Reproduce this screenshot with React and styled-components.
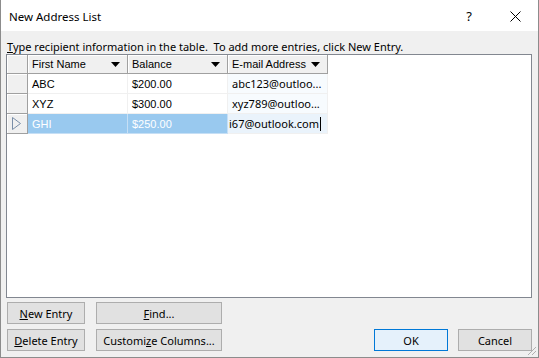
import React from "react";
import styled, { createGlobalStyle } from "styled-components";

const Global = createGlobalStyle`
  html, body { margin: 0; padding: 0; background: #f0f0f0; }
  body { font-family: "Segoe UI", "Noto Sans", "Liberation Sans", sans-serif; }
`;

const Window = styled.div`
  width: 539px;
  height: 358px;
  box-sizing: border-box;
  border: 1px solid #8c8c8c;
  border-top: none;
  display: flex;
  flex-direction: column;
  background: #f0f0f0;
  position: relative;
`;

const TitleBar = styled.div`
  height: 31px;
  background: #fff;
  display: flex;
  align-items: center;
  padding-left: 8px;
  padding-top: 1px;
  box-sizing: border-box;
  font-size: 11.5px;
  color: #000;
`;

const TitleText = styled.div`
  flex: 1;
`;

const TitleButton = styled.div`
  width: ${(p) => p.$w}px;
  display: flex;
  justify-content: center;
  align-items: center;
  font-size: 13px;
`;

const Body = styled.div`
  flex: 1;
  display: flex;
  flex-direction: column;
  padding: 8px 6px 0 5px;
`;

const Instruction = styled.div`
  font-size: 11px;
  height: 15px;
  line-height: 15px;
  padding-left: 1px;
  white-space: nowrap;
`;

const TableBox = styled.div`
  height: 244px;
  box-sizing: border-box;
  border: 1px solid #828790;
  background: #fff;
`;

const Grid = styled.div`
  display: grid;
  grid-template-columns: 21px 100px 100px 100px;
  grid-auto-rows: 20px;
  grid-template-rows: 19px;
  font-family: "Liberation Sans", Arial, sans-serif;
  font-size: 11px;
`;

const Corner = styled.div`
  background: #f0f0f0;
  border-right: 1px solid #a0a0a0;
  border-bottom: 1px solid #a0a0a0;
  box-shadow: inset 1px 1px 0 #fff;
`;

const HeaderCell = styled.div`
  background: #f0f0f0;
  border-right: 1px solid #a0a0a0;
  border-bottom: 1px solid #a0a0a0;
  box-shadow: inset 1px 1px 0 #fff;
  display: flex;
  align-items: center;
  padding-left: 4px;
  padding-right: 7px;
  color: #000;
`;

const HeaderLabel = styled.span`
  flex: 1;
`;

const RowHead = styled.div`
  background: #f0f0f0;
  border-right: 1px solid #a0a0a0;
  border-bottom: 1px solid #a0a0a0;
  box-shadow: inset 1px 1px 0 #fff;
  display: flex;
  align-items: center;
  padding-left: 5px;
`;

const Cell = styled.div`
  display: flex;
  align-items: center;
  padding-left: 4px;
  border-right: 1px solid ${(p) => (p.$sel ? "#c6dff5" : "#f0f0f0")};
  border-bottom: 1px solid ${(p) => (p.$sel ? "#c6dff5" : "#f0f0f0")};
  background: ${(p) => (p.$sel ? "#99c9ef" : p.$email ? "#f7fbfe" : "#fff")};
  color: ${(p) => (p.$sel ? "#fff" : "#000")};
  font-family: ${(p) =>
    p.$email ? '"Segoe UI", "Noto Sans", sans-serif' : "inherit"};
  font-size: ${(p) => (p.$email ? "11px" : "inherit")};
  white-space: nowrap;
  overflow: hidden;
`;

const Editing = styled(Cell)`
  background: #eaf3fb;
  padding-left: 1px;
`;

const Caret = styled.span`
  display: inline-block;
  width: 1px;
  height: 14px;
  background: #000;
  margin-left: 1px;
`;

const Buttons = styled.div`
  display: flex;
  align-items: flex-end;
  padding: 4px 0 6px 1px;
`;

const Column = styled.div`
  display: flex;
  flex-direction: column;
  gap: 5px;
  margin-right: ${(p) => p.$mr || 0}px;
`;

const Button = styled.div`
  width: ${(p) => p.$w}px;
  height: 22px;
  box-sizing: border-box;
  border: 1px solid ${(p) => (p.$default ? "#0078d7" : "#adadad")};
  background: ${(p) => (p.$default ? "#e5f1fb" : "#e1e1e1")};
  display: flex;
  align-items: center;
  justify-content: center;
  font-size: 11px;
  color: #000;
  white-space: nowrap;
  margin-left: ${(p) => p.$ml || 0}px;
`;

const Spacer = styled.div`
  flex: 1;
`;

const Grip = styled.svg`
  position: absolute;
  right: 1px;
  bottom: 1px;
`;

const Arrow = () => (
  <svg width="9" height="5" viewBox="0 0 9 5">
    <polygon points="0,0 9,0 4.5,5" fill="#000" />
  </svg>
);

const rows = [
  { first: "ABC", balance: "$200.00", email: "abc123@outloo..." },
  { first: "XYZ", balance: "$300.00", email: "xyz789@outloo..." },
];

export default function App() {
  return (
    <>
      <Global />
      <Window>
        <TitleBar>
          <TitleText>New Address List</TitleText>
          <TitleButton $w={46}>?</TitleButton>
          <TitleButton $w={46}>
            <svg width="11" height="11" viewBox="0 0 11 11">
              <path d="M0.5 0.5L10.5 10.5M10.5 0.5L0.5 10.5" stroke="#000" strokeWidth="1" />
            </svg>
          </TitleButton>
        </TitleBar>
        <Body>
          <Instruction>
            <u>T</u>ype recipient information in the table.&nbsp; To add more entries, click New Entry.
          </Instruction>
          <TableBox>
            <Grid>
              <Corner />
              <HeaderCell>
                <HeaderLabel>First Name</HeaderLabel>
                <Arrow />
              </HeaderCell>
              <HeaderCell>
                <HeaderLabel>Balance</HeaderLabel>
                <Arrow />
              </HeaderCell>
              <HeaderCell>
                <HeaderLabel>E-mail Address</HeaderLabel>
                <Arrow />
              </HeaderCell>
              {rows.map((r) => (
                <React.Fragment key={r.first}>
                  <RowHead />
                  <Cell>{r.first}</Cell>
                  <Cell>{r.balance}</Cell>
                  <Cell $email>{r.email}</Cell>
                </React.Fragment>
              ))}
              <RowHead>
                <svg width="9" height="13" viewBox="0 0 9 13">
                  <polygon points="0.5,0.5 8.5,6.5 0.5,12.5" fill="none" stroke="#7a8ea8" />
                </svg>
              </RowHead>
              <Cell $sel>GHI</Cell>
              <Cell $sel>$250.00</Cell>
              <Editing $email>
                i67@outlook.com
                <Caret />
              </Editing>
            </Grid>
          </TableBox>
          <Buttons>
            <Column $mr={11}>
              <Button $w={78}>
                <span><u>N</u>ew Entry</span>
              </Button>
              <Button $w={78}>
                <span><u>D</u>elete Entry</span>
              </Button>
            </Column>
            <Column>
              <Button $w={126}>
                <span><u>F</u>ind...</span>
              </Button>
              <Button $w={126}>
                <span>Customi<u>z</u>e Columns...</span>
              </Button>
            </Column>
            <Spacer />
            <Button $w={74} $default>OK</Button>
            <Button $w={74} $ml={10}>Cancel</Button>
          </Buttons>
        </Body>
        <Grip width="12" height="12" viewBox="0 0 12 12">
          <path d="M11 3L3 11M11 7L7 11" stroke="#b0b0b0" strokeWidth="1" />
        </Grip>
      </Window>
    </>
  );
}
